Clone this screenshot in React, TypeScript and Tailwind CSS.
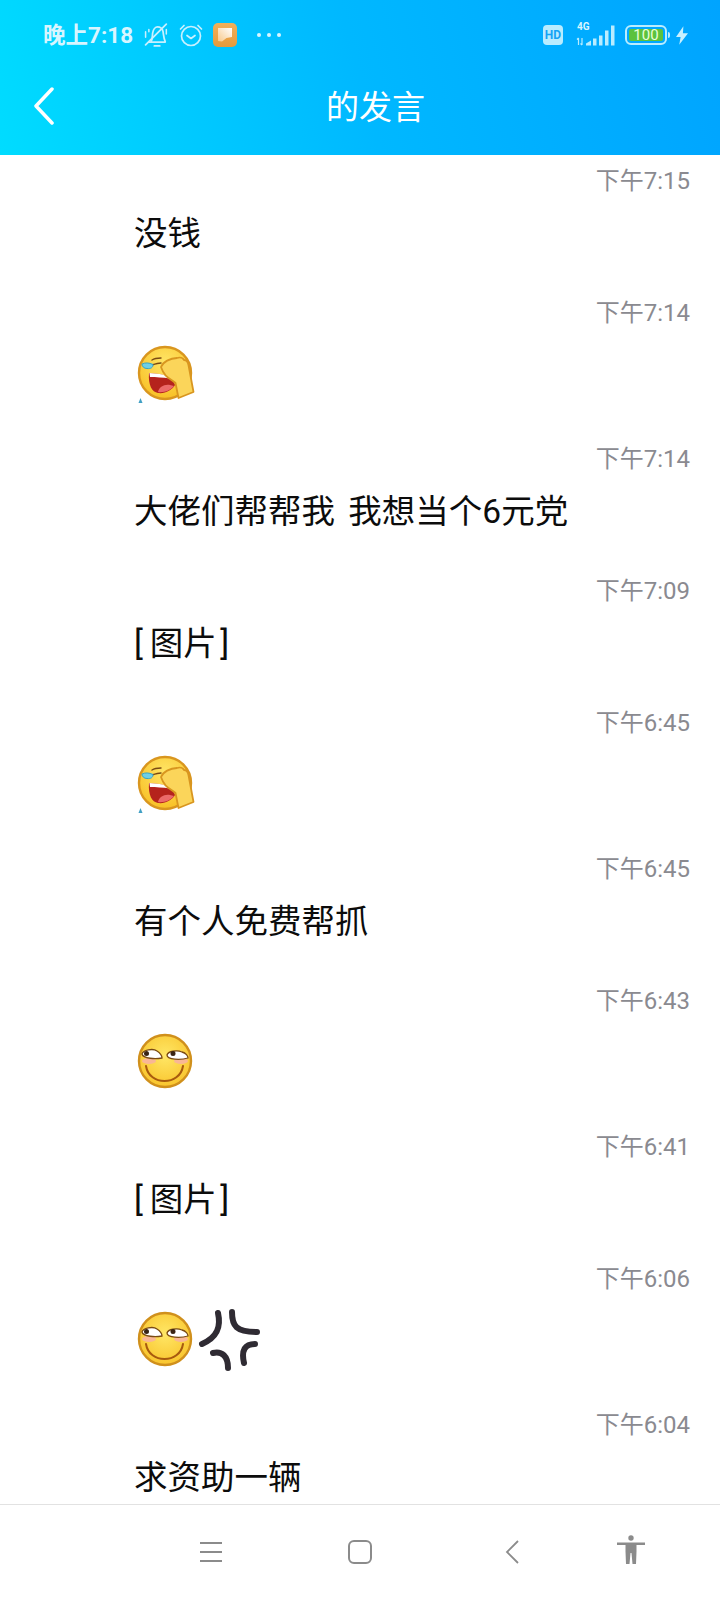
const fontStack = "font-['Roboto','Noto_Sans_CJK_SC',sans-serif]";

function BellOff() {
  return (
    <svg width="25" height="24" viewBox="2 2 22 22" fill="none" stroke="#c8f0ff" strokeWidth="1.600" strokeLinecap="round" strokeLinejoin="round">
      <path d="M6 19.500h15M8 19c1.500-2 1-5 1.500-8S12 5.500 14 5.500s4.500 1.500 5 4.500.500 6 2 9" />
      <path d="M11 23h5" />
      <path d="M3 10v5M6 8v2M22 8v4" strokeWidth="1.400" />
      <path d="M3 22 22 3" />
    </svg>
  );
}

function Alarm() {
  return (
    <svg width="24" height="24" viewBox="0 1 24 24" fill="none" stroke="#c8f0ff" strokeWidth="1.700" strokeLinecap="round" strokeLinejoin="round">
      <circle cx="12" cy="14" r="9.500" />
      <path d="M1.500 7 5 3.500M22.500 7 19 3.500" />
      <path d="M8 13.500l4 3 4-3" />
    </svg>
  );
}

function AppIcon() {
  return (
    <svg width="24" height="24" viewBox="0 0 24 24">
      <defs>
        <linearGradient id="appBg" x1="0" y1="0" x2="0" y2="1">
          <stop offset="0" stopColor="#f2b05a" />
          <stop offset="1" stopColor="#e59a3c" />
        </linearGradient>
        <linearGradient id="appNote" x1="0" y1="1" x2="1" y2="0">
          <stop offset="0" stopColor="#f8c98a" />
          <stop offset="1" stopColor="#ffffff" />
        </linearGradient>
      </defs>
      <rect width="24" height="24" rx="5" fill="url(#appBg)" />
      <path d="M5 5h14v9l-5.500 1L9 18.500 5 18z" fill="url(#appNote)" />
    </svg>
  );
}

function HdBadge() {
  return (
    <div className="flex h-[20px] w-[20px] items-center justify-center rounded-[4px] bg-[#b9ecff] font-['Roboto',sans-serif] text-[12px] leading-none font-bold text-[#14a3f5]">
      HD
    </div>
  );
}

function Signal() {
  return (
    <svg width="39" height="24" viewBox="0 0 39 24" fill="#b9ecff">
      <path d="M2.500 15v7M1 16.500l1.500-1.500M6 22v-7M4.500 20.500 6 22" stroke="#b9ecff" strokeWidth="1.200" fill="none" />
      <path d="M10 22.500v-2l5-3v5zM17 22.500v-7h3.500v7zM23 22.500v-10h3.500v10zM29 22.500v-15h3.500v15zM35 22.500v-20h3.500v20z" />
    </svg>
  );
}

function Battery() {
  return (
    <div className="flex items-center">
      <div className="flex h-[20px] w-[42px] items-center justify-center rounded-[6px] border-[2px] border-[#b9ecff] p-[2px]">
        <div className="flex h-full w-full items-center justify-center rounded-[2px] bg-[#5cc23e] font-['Roboto',sans-serif] text-[15px] leading-none text-[#e9ffd9]">
          100
        </div>
      </div>
      <div className="ml-[1px] h-[6px] w-[2px] rounded-r-sm bg-[#b9ecff]" />
    </div>
  );
}

function Bolt() {
  return (
    <svg width="12" height="19" viewBox="0 0 13 20" fill="#c8f0ff">
      <path d="M8 0 0 11.500h5L3.500 20 13 7.500H7.500z" />
    </svg>
  );
}

function StatusBar() {
  return (
    <div className="flex h-[70px] items-center pr-[32px] pl-[43px]">
      <span className={`${fontStack} w-[92px] text-[22.500px] leading-none font-bold whitespace-nowrap text-[#d8f5ff]`}>
        晚上7:18
      </span>
      <div className="ml-[9px] flex items-center gap-[10px]">
        <BellOff />
        <Alarm />
        <AppIcon />
      </div>
      <div className="ml-[20px] flex gap-[6px]">
        <span className="h-[4px] w-[4px] rounded-full bg-[#d8f5ff]" />
        <span className="h-[4px] w-[4px] rounded-full bg-[#d8f5ff]" />
        <span className="h-[4px] w-[4px] rounded-full bg-[#d8f5ff]" />
      </div>
      <div className="ml-auto flex items-center">
        <HdBadge />
        <div className="relative ml-[13px]">
          <span className="absolute top-[-1px] left-[1px] font-['Roboto',sans-serif] text-[10px] leading-none font-bold text-[#d8f5ff]">
            4G
          </span>
          <Signal />
        </div>
        <div className="ml-[10px]">
          <Battery />
        </div>
        <div className="ml-[6px]">
          <Bolt />
        </div>
      </div>
    </div>
  );
}

function Header() {
  return (
    <div className="h-[155px] shrink-0 bg-[linear-gradient(75deg,#00dcff,#00b8ff_50%,#00a4ff)]">
      <StatusBar />
      <div className="flex h-[71px] items-center pl-[33px]">
        <svg width="22" height="38" viewBox="0 0 22 38" fill="none" stroke="#ffffff" strokeWidth="3.500" strokeLinecap="round" strokeLinejoin="round">
          <path d="M19 2 3 19l16 17" />
        </svg>
        <span className="ml-[271px] font-['Noto_Sans_CJK_SC',sans-serif] text-[33px] leading-none text-white">
          的发言
        </span>
      </div>
    </div>
  );
}

function Facepalm() {
  return (
    <svg width="66" height="66" viewBox="0 0 66 66">
      <defs>
        <radialGradient id="palmFace" cx="0.500" cy="0.300" r="0.800">
          <stop offset="0" stopColor="#ffe566" />
          <stop offset="1" stopColor="#f7bb1c" />
        </radialGradient>
      </defs>
      <circle cx="31" cy="33" r="26" fill="url(#palmFace)" stroke="#d9961f" strokeWidth="2.400" />
      <path d="M15 33c7 .500 14 1 19 4 4 2 6 5 7 8-3 5-10 9-17 8-6-1-10-8-9-20z" fill="#b5231c" />
      <path d="M15.500 33c7 .500 14 1 19 4l1.500 1.500c-7-1-14-1.500-20-1.500z" fill="#ffffff" />
      <path d="M24 52c1-5 6-8 12-7l4 1c-3 4-10 7-16 6z" fill="#ec6a6a" />
      <path d="M18 20c3-2 6-2 9-2M18 25c3-1 6-2 9-2" fill="none" stroke="#7a4a12" strokeWidth="1.400" strokeLinecap="round" />
      <path d="M8 24c3-1.500 7-1.500 11 .500 0 3-2 4.500-6 4-3 0-5-2-5-4.500z" fill="#6fcfe6" stroke="#3aa3c4" strokeWidth="1" />
      <path d="M27 27c2-5 9-9 16-9 3-1 6 0 7 2 3 0 4 2 4.500 5l5 27-15 6-3-15c-4-4-11-5-14.500-16z" fill="#fbd55a" stroke="#d9961f" strokeWidth="1.800" strokeLinejoin="round" />
      <path d="M4.500 63 6.500 58l2 5z" fill="#3f9fc4" />
    </svg>
  );
}

function Smiley() {
  return (
    <svg width="66" height="66" viewBox="0 0 66 66">
      <defs>
        <radialGradient id="smileFace" cx="0.500" cy="0.400" r="0.700">
          <stop offset="0" stopColor="#ffe766" />
          <stop offset="1" stopColor="#f8bf24" />
        </radialGradient>
      </defs>
      <circle cx="31" cy="33" r="26" fill="url(#smileFace)" stroke="#d0901c" strokeWidth="2.400" />
      <ellipse cx="15" cy="33" rx="7" ry="3" fill="#f9b795" />
      <ellipse cx="47" cy="33" rx="7" ry="3" fill="#f9b795" />
      <path d="M8 26c1-4 11-6 15-3 3 2 5 5 5 7-6 1-19 1-20-4z" fill="#ffffff" stroke="#7a4a12" strokeWidth="1.300" />
      <path d="M33 27c1-4 10-5 15-3 4 1 6 4 6 6-7 2-21 2-21-3z" fill="#ffffff" stroke="#7a4a12" strokeWidth="1.300" />
      <circle cx="12.500" cy="25.500" r="2.500" fill="#3a2415" />
      <circle cx="39" cy="25.500" r="2.500" fill="#3a2415" />
      <path d="M12 38c3 20 34 20 37 0" fill="none" stroke="#a85a0e" strokeWidth="2" strokeLinecap="round" />
    </svg>
  );
}

function AngerMark() {
  return (
    <svg width="66" height="66" viewBox="0 0 66 66" fill="none" stroke="#2f2b33" strokeWidth="6" strokeLinecap="round">
      <path d="M22 7c3 13 0 24-16 31" />
      <path d="M36 6c0 14 4 20 25 20" />
      <path d="M17 47c9-2 15 3 15 15" />
      <path d="M59 38c-10 0-14 6-11 19" />
    </svg>
  );
}

type Message =
  | { time: string; text: string }
  | { time: string; emoji: "palm" | "smile" | "anger" };

const messages: Message[] = [
  { time: "下午7:15", text: "没钱" },
  { time: "下午7:14", emoji: "palm" },
  { time: "下午7:14", text: "大佬们帮帮我 我想当个6元党" },
  { time: "下午7:09", text: "[\u2009图片\u200a]" },
  { time: "下午6:45", emoji: "palm" },
  { time: "下午6:45", text: "有个人免费帮抓" },
  { time: "下午6:43", emoji: "smile" },
  { time: "下午6:41", text: "[\u2009图片\u200a]" },
  { time: "下午6:06", emoji: "anger" },
  { time: "下午6:04", text: "求资助一辆" },
];

function MessageRow({ message }: { message: Message }) {
  return (
    <div className="pr-[30px] pb-[24px] pl-[134px]">
      <div className={`${fontStack} flex h-[36px] items-center justify-end pt-[2px] text-[24px] text-[#8a8a90]`}>
        {message.time}
      </div>
      {"text" in message ? (
        <div className={`${fontStack} flex h-[72px] items-center text-[33.500px] [word-spacing:5px] whitespace-pre text-[#0c0c0c]`}>
          {message.text}
        </div>
      ) : (
        <div className="flex h-[86px] items-center">
          {message.emoji === "palm" && <Facepalm />}
          {message.emoji === "smile" && <Smiley />}
          {message.emoji === "anger" && (
            <>
              <Smiley />
              <div className="-ml-[4px]">
                <AngerMark />
              </div>
            </>
          )}
        </div>
      )}
    </div>
  );
}

function BottomNav() {
  return (
    <div className="flex h-[96px] shrink-0 items-center border-t border-[#e2e2e2] bg-white pb-[2px] pl-[200px]">
      <svg width="22" height="20" viewBox="0 0 22 20" stroke="#8b8b8b" strokeWidth="1.800">
        <path d="M0 1h22M0 10h22M0 19h22" />
      </svg>
      <div className="ml-[126px] h-[24px] w-[24px] rounded-[6px] border-[2px] border-[#8b8b8b]" />
      <svg className="ml-[133px]" width="14" height="24" viewBox="0 0 14 24" fill="none" stroke="#8b8b8b" strokeWidth="1.800">
        <path d="M13 1 2 12l11 11" />
      </svg>
      <svg className="mb-[4px] ml-[98px]" width="28" height="30" viewBox="0 0 28 30" fill="#8b8b8b">
        <circle cx="14" cy="3" r="2.700" />
        <path d="M0 7.500h28v2.500h-8.500v6.500L19 29h-3.500l-1-11h-1l-1 11H9l-.500-12.500V10H0z" />
      </svg>
    </div>
  );
}

export default function App() {
  return (
    <div className="flex h-[1600px] w-[720px] flex-col overflow-hidden bg-white">
      <Header />
      <div className="min-h-0 flex-1 overflow-hidden pt-[7px]">
        {messages.map((message, i) => (
          <MessageRow key={i} message={message} />
        ))}
      </div>
      <BottomNav />
    </div>
  );
}
